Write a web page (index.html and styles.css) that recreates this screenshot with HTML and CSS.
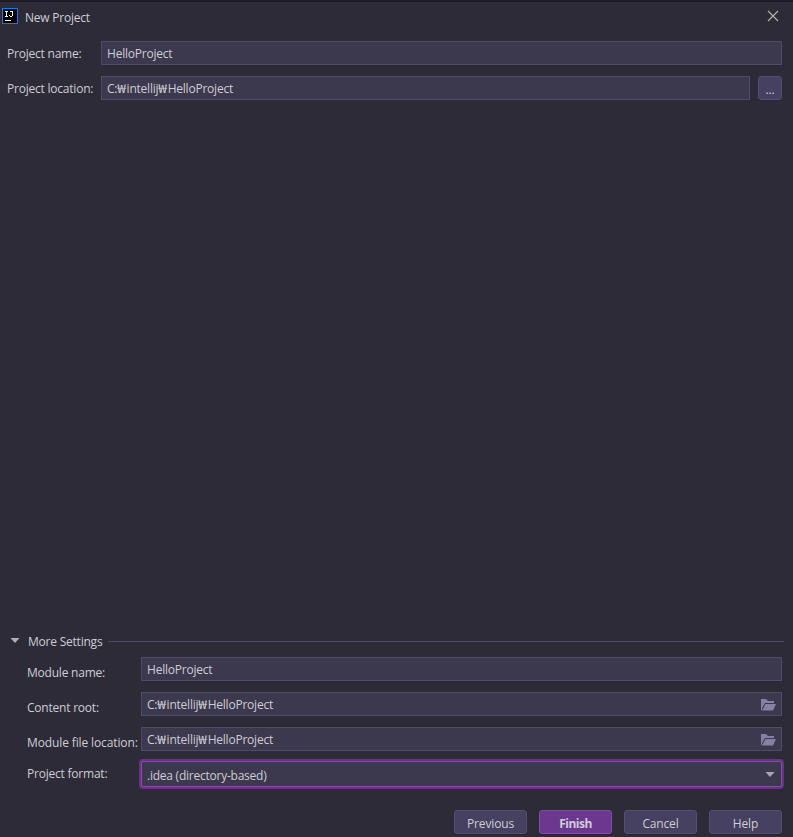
FILE: index.html
```html
<!DOCTYPE html>
<html lang="en">
<head>
<meta charset="utf-8">
<title>New Project</title>
<link rel="stylesheet" href="styles.css">
</head>
<body>
<main class="dialog">
  <header class="titlebar">
    <svg class="logo" width="16" height="16" viewBox="0 0 16 16" shape-rendering="crispEdges">
      <path fill="#087cfa" d="M0 0h16v16H0z"/><path fill="#000" d="M1 1h14v14H1z"/>
      <path fill="#fff" d="M3 3h3v1H3zM4 4h1v4H4zM3 8h3v1H3zM8 3h3v1H8zM10 4h1v4h-1zM7 7h1v1H7zM8 8h2v1H8zM3 12h6v1H3z"/>
    </svg>
    <h1 class="title">New Project</h1>
    <svg class="close" width="12" height="12" viewBox="0 0 12 12"><path d="M1 1l10 10M11 1L1 11" stroke="#b5b5b3" stroke-width="1.1"/></svg>
  </header>
  <section class="project">
    <div class="row"><label class="label">Project name:</label><div class="field">HelloProject</div></div>
    <div class="row"><label class="label">Project location:</label><div class="field"><span>C:<span class="won">₩</span>intellij<span class="won">₩</span>HelloProject</span></div><button class="button browse">...</button></div>
  </section>
  <section class="more">
    <div class="heading">
      <svg class="toggle" width="10" height="6" viewBox="0 0 10 6"><path fill="#aeadb9" d="M.5 0h9L5 5z"/></svg>
      <span class="heading-text">More Settings</span><span class="rule"></span>
    </div>
    <div class="row"><label class="label">Module name:</label><div class="field">HelloProject</div></div>
    <div class="row"><label class="label">Content root:</label><div class="field"><span>C:<span class="won">₩</span>intellij<span class="won">₩</span>HelloProject</span><svg class="folder" width="15" height="12" viewBox="0 0 15 12"><path fill="#8780a3" d="M0 0h5l2 2h6v2H4L1 9v2H0zM4.500 5H15l-3 6.500H1z"/></svg></div></div>
    <div class="row"><label class="label file">Module file location:</label><div class="field"><span>C:<span class="won">₩</span>intellij<span class="won">₩</span>HelloProject</span><svg class="folder" width="15" height="12" viewBox="0 0 15 12"><path fill="#8780a3" d="M0 0h5l2 2h6v2H4L1 9v2H0zM4.500 5H15l-3 6.500H1z"/></svg></div></div>
    <div class="row format-row"><label class="label format">Project format:</label><div class="field select"><span class="select-text">.idea (directory-based)</span><svg class="arrow" width="10" height="6" viewBox="0 0 10 6"><path fill="#aaa5b6" d="M.5 0h9L5 5z"/></svg></div></div>
  </section>
  <footer class="actions">
    <button class="button">Previous</button><button class="button primary">Finish</button><button class="button">Cancel</button><button class="button">Help</button>
  </footer>
</main>
</body>
</html>
```
FILE: styles.css
```css
* { box-sizing: border-box; }
body { margin: 0; background: #2d2b38; color: #cfcdd5; font: 12px/16px "Open Sans", "Noto Sans CJK KR", sans-serif; letter-spacing: -.22px; }
.dialog { height: 837px; display: flex; flex-direction: column; border-top: 2px solid #1c1a26; overflow: hidden; }
.titlebar { height: 39px; flex: none; display: flex; align-items: flex-start; padding: 6px 14px 0 2px; }
.logo { display: block; }
.title { font-size: 12px; font-weight: 400; line-height: 16px; margin: 2px auto 0 7px; }
.close { margin-top: 2px; }
.project { padding: 0 11px 0 7px; display: flex; flex-direction: column; gap: 11px; }
.row { display: flex; height: 24px; }
.label { width: 94px; flex: none; line-height: 24px; padding-top: 1px; white-space: nowrap; }
.field { flex: 1; display: flex; align-items: center; padding: 2px 5px 0; background: #3c384e; border: 1px solid #504b66; line-height: 16px; white-space: nowrap; }
.won { display: inline-block; width: 9.3px; text-align: center; line-height: 1; letter-spacing: 0; transform: scaleX(1.3); }
.folder { margin: -1px 0 0 auto; }
.button { width: 73px; height: 24px; padding: 3px 0 0; border: 1px solid #544f70; border-radius: 3px; background: #464160; color: inherit; font: inherit; letter-spacing: -.15px; text-align: center; box-shadow: 0 1px 0 #282633; }
.browse { width: 24px; margin-left: 8px; }
.more { margin-top: auto; padding-right: 11px; }
.more .row { padding-left: 27px; margin-bottom: 11px; }
.more .label { width: 114px; padding-top: 4px; }
.more .file { letter-spacing: -.12px; }
.heading { display: flex; align-items: center; height: 16px; margin: 0 -2px 8px 0; padding-left: 10px; }
.toggle { margin-top: -1px; }
.heading-text { margin-left: 8px; padding-top: 1px; }
.rule { flex: 1; height: 1px; margin-left: 6px; background: #504b66; }
.more .format-row { height: 26px; margin: -1px 0 23px; }
.more .format { padding-top: 1px; }
.select { justify-content: space-between; padding: 0 6px 0 5px; border-color: #8a4ba3; border-radius: 2px; box-shadow: 0 0 0 2px #67338a; }
.select-text { padding-top: 3px; letter-spacing: -.24px; }
.arrow { margin-top: 2px; }
.actions { display: flex; justify-content: flex-end; gap: 12px; padding: 0 11px 3px; }
.primary { background: #6b378f; border-color: #7f4da5; font-weight: 700; letter-spacing: -.5px; }
```
